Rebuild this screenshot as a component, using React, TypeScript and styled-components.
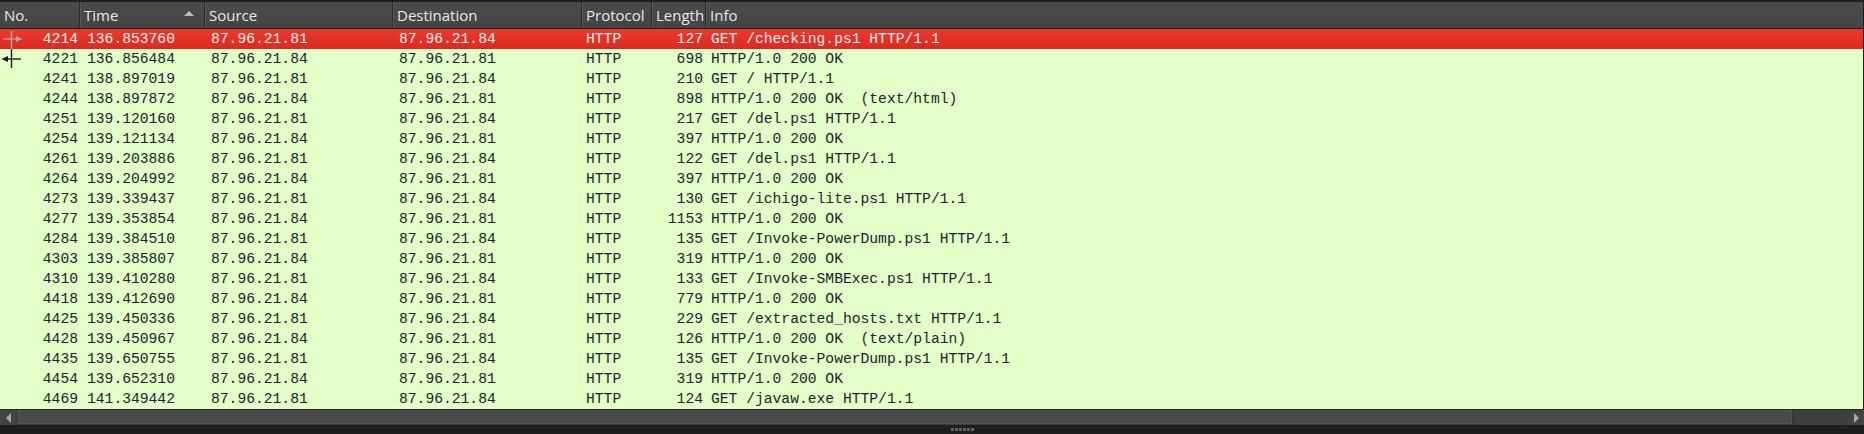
import React from "react";
import styled, { createGlobalStyle, css } from "styled-components";

const Global = createGlobalStyle`
  html, body { margin: 0; padding: 0; background: #1e1e1e; }
  #root { width: 1864px; height: 434px; }
`;

const COLS = "80px 125px 188px 189px 70px 54px 1fr";

const Frame = styled.div`
  display: flex;
  flex-direction: column;
  width: 1864px;
  height: 434px;
  background: #1e1e1e;
  padding-top: 2px;
  box-sizing: border-box;
  overflow: hidden;
`;

const Header = styled.div`
  display: grid;
  grid-template-columns: ${COLS};
  height: 26px;
  margin-right: 1px;
  background: linear-gradient(#4b4b4b, #454545);
  border-bottom: 1px solid #1c1c1c;
  font-family: "Open Sans", "Noto Sans", sans-serif;
  font-size: 15px;
  color: #e8e8e8;
`;

const HeadCell = styled.div<{ $first?: boolean; $last?: boolean }>`
  position: relative;
  display: flex;
  align-items: center;
  padding-left: ${(p) => (p.$first ? "4px" : "4px")};
  border-right: ${(p) => (p.$last ? "none" : "1px solid #2c2c2c")};
  box-shadow: ${(p) => (p.$first ? "none" : "inset 1px 0 0 #575757")};
  white-space: nowrap;
  overflow: hidden;
`;

const SortArrow = styled.span`
  position: absolute;
  right: 10px;
  top: 9px;
  width: 0;
  height: 0;
  border-left: 5px solid transparent;
  border-right: 5px solid transparent;
  border-bottom: 5px solid #bdbdbd;
`;

const Body = styled.div`
  display: flex;
  flex-direction: column;
  margin-right: 1px;
  font-family: "Liberation Mono", "DejaVu Sans Mono", monospace;
  font-size: 14.67px;
`;

const Row = styled.div<{ $selected?: boolean }>`
  display: grid;
  grid-template-columns: ${COLS};
  height: 20px;
  line-height: 20px;
  white-space: pre;
  ${(p) =>
    p.$selected
      ? css`
          background: linear-gradient(#e93b31, #de281f);
          color: #fdf1ef;
        `
      : css`
          background: #e4ffc7;
          color: #12272e;
        `}
`;

const Cell = styled.div<{ $align?: "left" | "right"; $pad?: number }>`
  display: flex;
  align-items: center;
  justify-content: ${(p) => (p.$align === "right" ? "flex-end" : "flex-start")};
  padding-left: ${(p) => (p.$align === "right" ? 0 : p.$pad ?? 6)}px;
  padding-right: ${(p) => (p.$align === "right" ? 3 : 0)}px;
  overflow: hidden;
`;

const NoCell = styled.div`
  position: relative;
  display: flex;
  align-items: center;
  justify-content: flex-end;
  padding-right: 2px;
`;

const Marker = styled.svg`
  position: absolute;
  left: 0;
  top: 0;
`;

const Scrollbar = styled.div`
  display: flex;
  height: 15px;
  border-top: 1px solid #262626;
  background: #3c3c3c;
`;

const ScrollBtn = styled.div`
  width: 17px;
  display: flex;
  align-items: center;
  justify-content: center;
  background: #434343;
`;

const Thumb = styled.div`
  flex: 1;
  margin: 0 1px 1px 1px;
  background: #4a4a4a;
  border: 1px solid #575757;
  border-top-color: #525252;
`;

const Track = styled.div`
  width: 53px;
  background: #3e3e3e;
  border-left: 1px solid #2e2e2e;
`;

const Splitter = styled.div`
  flex: 1;
  display: flex;
  align-items: center;
  padding-left: 951px;
  gap: 1px;
  background: #1e1e1e;
`;

const Dot = styled.span`
  width: 3px;
  height: 3px;
  background: #606060;
`;

type Pkt = [string, string, string, string, string, string, string];

const A = "87.96.21.81";
const B = "87.96.21.84";

const rows: Pkt[] = [
  ["4214", "136.853760", A, B, "HTTP", "127", "GET /checking.ps1 HTTP/1.1"],
  ["4221", "136.856484", B, A, "HTTP", "698", "HTTP/1.0 200 OK"],
  ["4241", "138.897019", A, B, "HTTP", "210", "GET / HTTP/1.1"],
  ["4244", "138.897872", B, A, "HTTP", "898", "HTTP/1.0 200 OK  (text/html)"],
  ["4251", "139.120160", A, B, "HTTP", "217", "GET /del.ps1 HTTP/1.1"],
  ["4254", "139.121134", B, A, "HTTP", "397", "HTTP/1.0 200 OK"],
  ["4261", "139.203886", A, B, "HTTP", "122", "GET /del.ps1 HTTP/1.1"],
  ["4264", "139.204992", B, A, "HTTP", "397", "HTTP/1.0 200 OK"],
  ["4273", "139.339437", A, B, "HTTP", "130", "GET /ichigo-lite.ps1 HTTP/1.1"],
  ["4277", "139.353854", B, A, "HTTP", "1153", "HTTP/1.0 200 OK"],
  ["4284", "139.384510", A, B, "HTTP", "135", "GET /Invoke-PowerDump.ps1 HTTP/1.1"],
  ["4303", "139.385807", B, A, "HTTP", "319", "HTTP/1.0 200 OK"],
  ["4310", "139.410280", A, B, "HTTP", "133", "GET /Invoke-SMBExec.ps1 HTTP/1.1"],
  ["4418", "139.412690", B, A, "HTTP", "779", "HTTP/1.0 200 OK"],
  ["4425", "139.450336", A, B, "HTTP", "229", "GET /extracted_hosts.txt HTTP/1.1"],
  ["4428", "139.450967", B, A, "HTTP", "126", "HTTP/1.0 200 OK  (text/plain)"],
  ["4435", "139.650755", A, B, "HTTP", "135", "GET /Invoke-PowerDump.ps1 HTTP/1.1"],
  ["4454", "139.652310", B, A, "HTTP", "319", "HTTP/1.0 200 OK"],
  ["4469", "141.349442", A, B, "HTTP", "124", "GET /javaw.exe HTTP/1.1"],
];

const RequestMarker = () => (
  <Marker width="26" height="20" viewBox="0 0 26 20">
    <line x1="11.5" y1="2" x2="11.5" y2="20" stroke="#b8a6a4" strokeWidth="1.4" />
    <line x1="3" y1="10" x2="17" y2="10" stroke="#b8a6a4" strokeWidth="1.4" />
    <polygon points="16,7 22.5,10 16,13" fill="#b8a6a4" />
  </Marker>
);

const ResponseMarker = () => (
  <Marker width="26" height="20" viewBox="0 0 26 20">
    <line x1="11.5" y1="0" x2="11.5" y2="19" stroke="#1b1b1b" strokeWidth="1.4" />
    <line x1="6" y1="10" x2="21" y2="10" stroke="#1b1b1b" strokeWidth="1.4" />
    <polygon points="8,7 1.5,10 8,13" fill="#1b1b1b" />
  </Marker>
);

const headers = ["No.", "Time", "Source", "Destination", "Protocol", "Length", "Info"];

export default function App() {
  return (
    <>
      <Global />
      <Frame>
        <Header>
          {headers.map((h, i) => (
            <HeadCell key={h} $first={i === 0} $last={i === headers.length - 1}>
              {h}
              {h === "Time" && <SortArrow />}
            </HeadCell>
          ))}
        </Header>
        <Body>
          {rows.map((r, i) => (
            <Row key={r[0]} $selected={i === 0}>
              <NoCell>
                {i === 0 && <RequestMarker />}
                {i === 1 && <ResponseMarker />}
                {r[0]}
              </NoCell>
              <Cell $pad={7}>{r[1]}</Cell>
              <Cell>{r[2]}</Cell>
              <Cell>{r[3]}</Cell>
              <Cell $pad={4}>{r[4]}</Cell>
              <Cell $align="right">{r[5]}</Cell>
              <Cell $pad={5}>{r[6]}</Cell>
            </Row>
          ))}
        </Body>
        <Scrollbar>
          <ScrollBtn>
            <svg width="8" height="10" viewBox="0 0 8 10">
              <polygon points="6,0 6,10 1,5" fill="#a8a8a8" />
            </svg>
          </ScrollBtn>
          <Thumb />
          <Track />
          <ScrollBtn>
            <svg width="8" height="10" viewBox="0 0 8 10">
              <polygon points="2,0 2,10 7,5" fill="#a8a8a8" />
            </svg>
          </ScrollBtn>
        </Scrollbar>
        <Splitter>
          {Array.from({ length: 6 }).map((_, i) => (
            <Dot key={i} />
          ))}
        </Splitter>
      </Frame>
    </>
  );
}
